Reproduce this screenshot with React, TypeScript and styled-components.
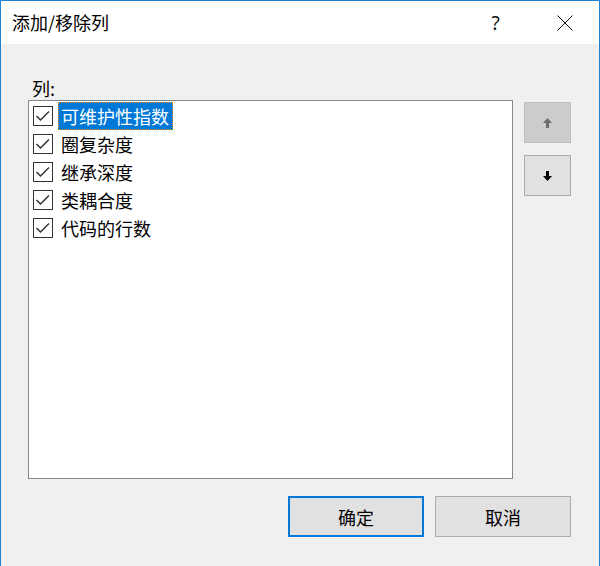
import React from "react";
import styled, { createGlobalStyle } from "styled-components";

const Global = createGlobalStyle`
  html, body { margin: 0; padding: 0; background: #f0f0f0; }
  body { font-family: "Noto Sans CJK SC", "Noto Sans", sans-serif; }
  * { box-sizing: border-box; }
`;

const Window = styled.div`
  width: 600px;
  height: 566px;
  background: #f0f0f0;
  border-left: 1px solid #1883d7;
  border-right: 1px solid #1883d7;
  border-top: 1px solid #1883d7;
  display: flex;
  flex-direction: column;
`;

const TitleBar = styled.div`
  height: 43px;
  background: #ffffff;
  display: flex;
  align-items: center;
`;

const Title = styled.div`
  flex: 1;
  padding-left: 11px;
  font-size: 18px;
  color: #000;
  line-height: 24px;
  padding-bottom: 2px;
`;

const CaptionButton = styled.div`
  width: 69px;
  height: 43px;
  display: flex;
  align-items: center;
  justify-content: center;
  font-family: "Noto Sans", "DejaVu Sans", sans-serif;
  font-size: 19px;
  font-weight: 400;
  color: #111;
`;

const Content = styled.div`
  flex: 1;
  display: flex;
  flex-direction: column;
  padding: 32px 28px 0 27px;
`;

const Label = styled.div`
  font-size: 18px;
  line-height: 24px;
  height: 24px;
  padding-left: 4px;
  color: #000;
`;

const MainRow = styled.div`
  display: flex;
  gap: 11px;
`;

const ListBox = styled.div`
  width: 485px;
  height: 379px;
  background: #fff;
  border: 1px solid #828790;
  padding: 1px 0 0 4px;
  display: flex;
  flex-direction: column;
`;

const Row = styled.div`
  height: 28px;
  display: flex;
  align-items: center;
`;

const Box = styled.div`
  width: 20px;
  height: 20px;
  border: 1px solid #333;
  background: #fff;
  display: flex;
  align-items: center;
  justify-content: center;
  margin-right: 5px;
`;

const ItemText = styled.span<{ $selected?: boolean }>`
  height: 28px;
  line-height: 26px;
  padding: 0 3px 0 2px;
  font-size: 18px;
  color: ${(p) => (p.$selected ? "#fff" : "#000")};
  background: ${(p) => (p.$selected ? "#0078d7" : "transparent")};
  border: 1px dotted ${(p) => (p.$selected ? "#ff8c00" : "transparent")};
`;

const SideColumn = styled.div`
  display: flex;
  flex-direction: column;
  gap: 12px;
  padding-top: 2px;
`;

const SideButton = styled.div<{ $disabled?: boolean }>`
  width: 47px;
  height: 41px;
  display: flex;
  align-items: center;
  justify-content: center;
  background: ${(p) => (p.$disabled ? "#cccccc" : "#e1e1e1")};
  border: 1px solid ${(p) => (p.$disabled ? "#bfbfbf" : "#adadad")};
  color: ${(p) => (p.$disabled ? "#6d6d6d" : "#000")};
`;

const Footer = styled.div`
  display: flex;
  justify-content: flex-end;
  gap: 11px;
  margin-top: 17px;
`;

const DialogButton = styled.div<{ $default?: boolean }>`
  width: 136px;
  height: 41px;
  display: flex;
  align-items: center;
  justify-content: center;
  background: #e1e1e1;
  border: ${(p) => (p.$default ? "2px solid #0078d7" : "1px solid #adadad")};
  font-size: 18px;
  color: #000;
`;

const Check = () => (
  <svg width="18" height="18" viewBox="0 0 18 18">
    <path d="M2.5 9 L6.5 13 L15 4.5" fill="none" stroke="#333" strokeWidth="1.5" />
  </svg>
);

const Arrow = ({ up }: { up?: boolean }) => (
  <svg width="9" height="10" viewBox="0 0 9 10" style={{ transform: up ? "none" : "rotate(180deg)" }}>
    <path d="M4.5 0 L9 5 L6 5 L6 10 L3 10 L3 5 L0 5 Z" fill="currentColor" />
  </svg>
);

const items = ["可维护性指数", "圈复杂度", "继承深度", "类耦合度", "代码的行数"];

export default function App() {
  return (
    <>
      <Global />
      <Window>
        <TitleBar>
          <Title>添加/移除列</Title>
          <CaptionButton>?</CaptionButton>
          <CaptionButton>
            <svg width="16" height="16" viewBox="0 0 16 16">
              <path d="M0.5 0.5 L15.5 15.5 M15.5 0.5 L0.5 15.5" stroke="#111" strokeWidth="1" />
            </svg>
          </CaptionButton>
        </TitleBar>
        <Content>
          <Label>列:</Label>
          <MainRow>
            <ListBox>
              {items.map((t, i) => (
                <Row key={t}>
                  <Box>
                    <Check />
                  </Box>
                  <ItemText $selected={i === 0}>{t}</ItemText>
                </Row>
              ))}
            </ListBox>
            <SideColumn>
              <SideButton $disabled>
                <Arrow up />
              </SideButton>
              <SideButton>
                <Arrow />
              </SideButton>
            </SideColumn>
          </MainRow>
          <Footer>
            <DialogButton $default>确定</DialogButton>
            <DialogButton>取消</DialogButton>
          </Footer>
        </Content>
      </Window>
    </>
  );
}
